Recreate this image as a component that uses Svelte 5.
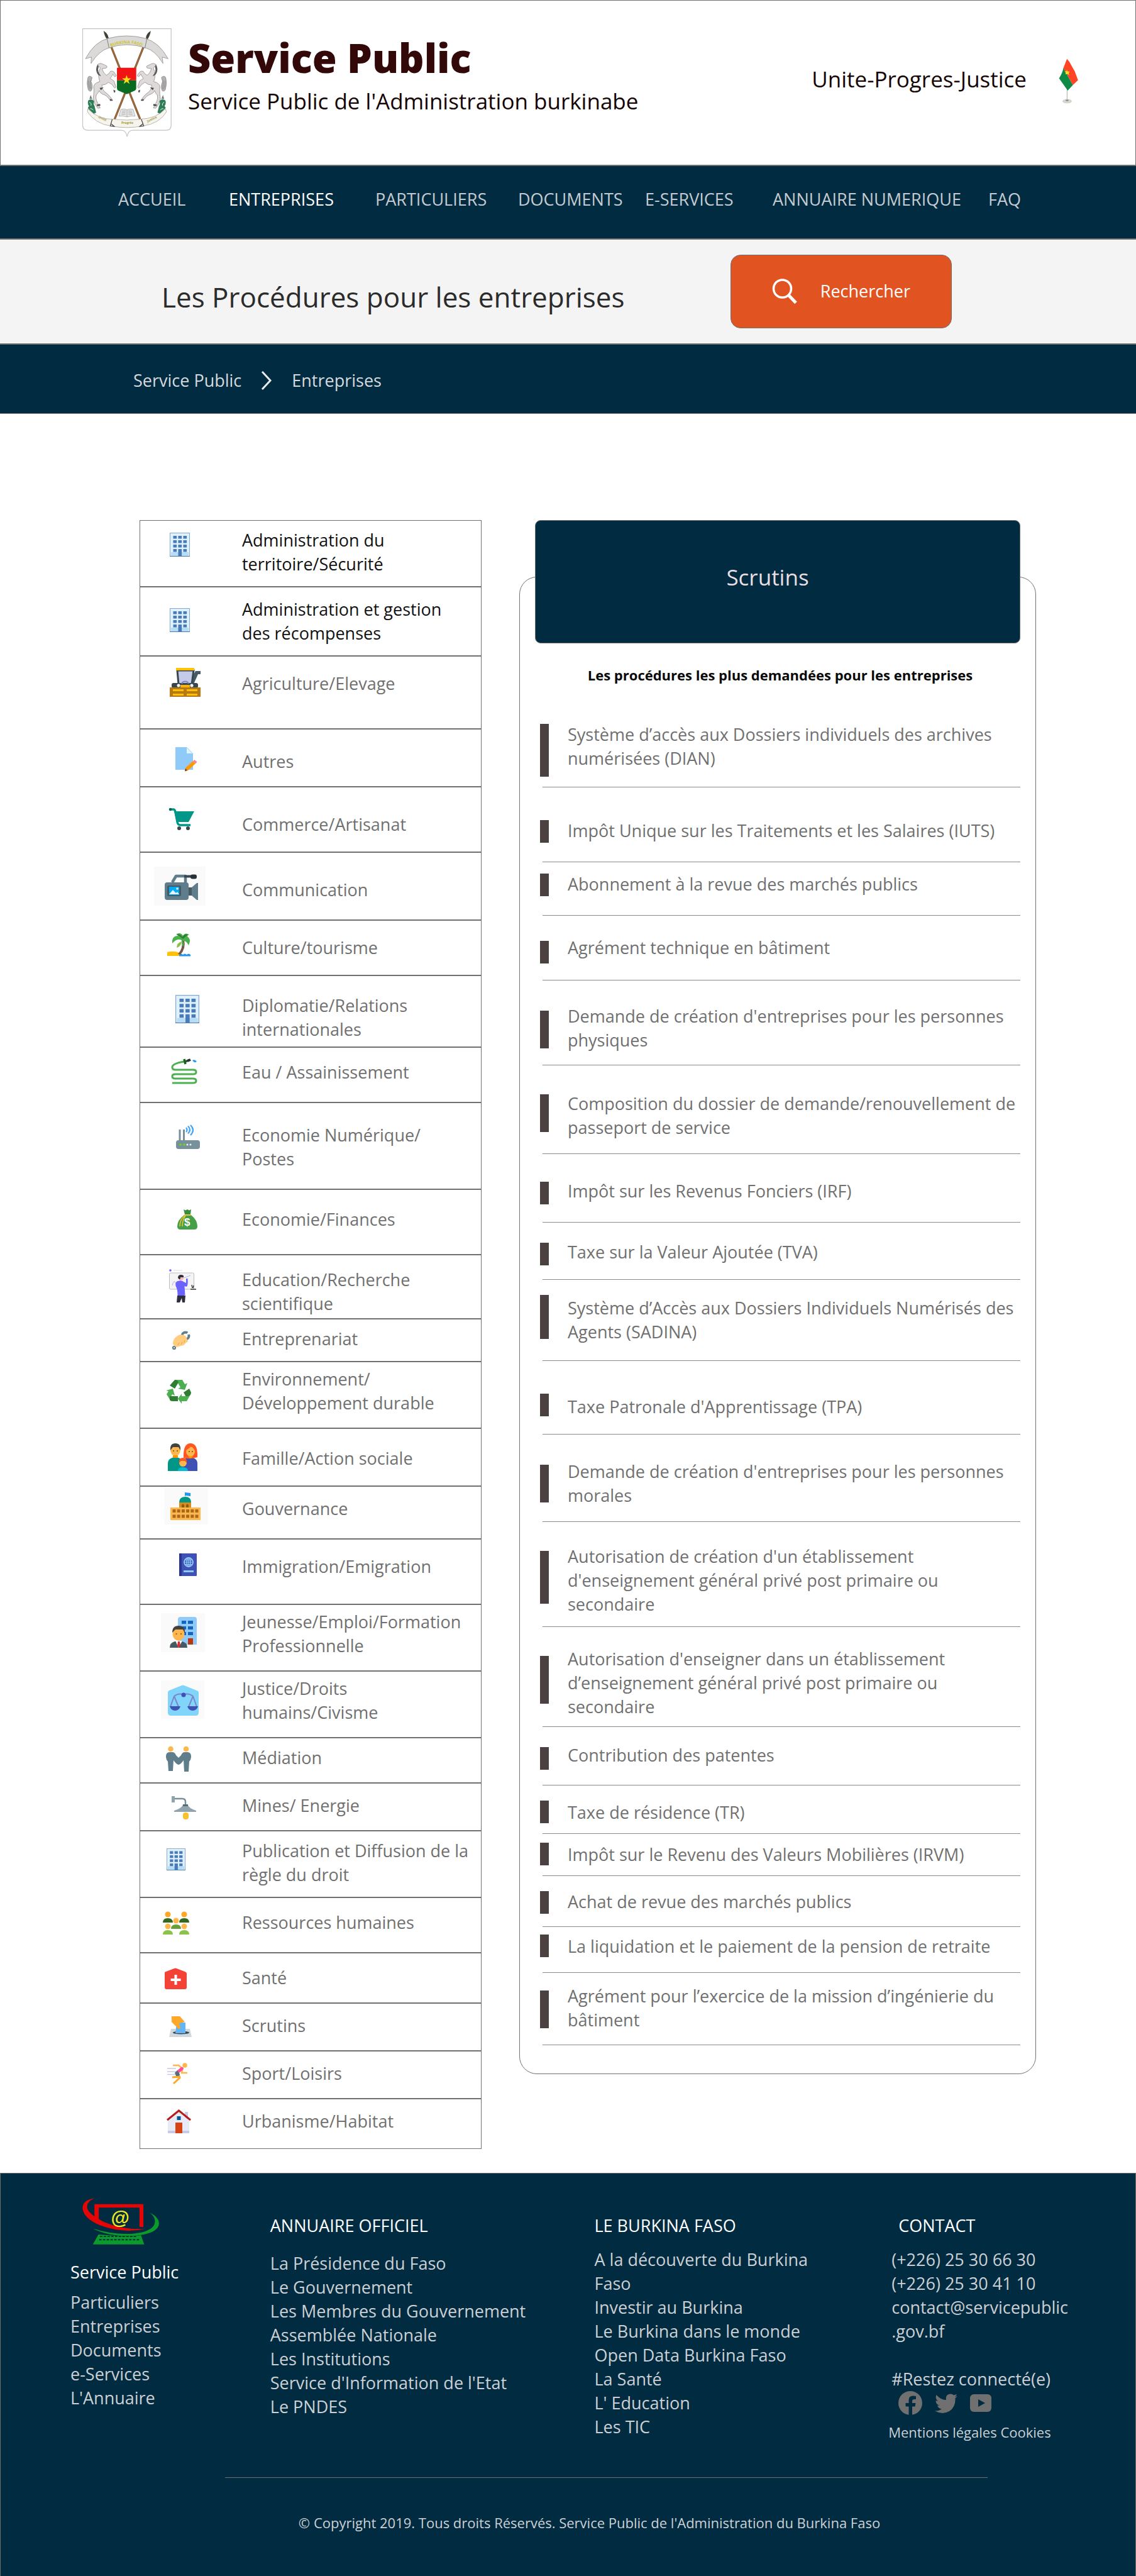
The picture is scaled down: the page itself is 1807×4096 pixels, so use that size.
<script>
  const nav = ['ACCUEIL', 'ENTREPRISES', 'PARTICULIERS', 'DOCUMENTS', 'E-SERVICES', 'ANNUAIRE NUMERIQUE', 'FAQ'];

  // before / after: space above and below the label, in pixels
  const themes = [
    { icon: 'building', x: 47, y: 19, w: 32, h: 38, label: 'Administration du\nterritoire/Sécurité', before: 12, after: 16, strong: true },
    { icon: 'building', x: 47, y: 33, w: 32, h: 38, label: 'Administration et gestion\ndes récompenses', before: 16, after: 16, strong: true },
    { icon: 'harvester', label: 'Agriculture/Elevage', before: 24, after: 52 },
    { icon: 'file', label: 'Autres', before: 32, after: 20 },
    { icon: 'cart', label: 'Commerce/Artisanat', before: 40, after: 24 },
    { icon: 'camera', label: 'Communication', before: 40, after: 28 },
    { icon: 'palm', label: 'Culture/tourisme', before: 24, after: 24 },
    { icon: 'building', x: 56, y: 30, w: 38, h: 45, label: 'Diplomatie/Relations\ninternationales', before: 28, after: 8 },
    { icon: 'hose', label: 'Eau / Assainissement', before: 20, after: 28 },
    { icon: 'router', label: 'Economie Numérique/\nPostes', before: 32, after: 28 },
    { icon: 'bag', label: 'Economie/Finances', before: 28, after: 36 },
    { icon: 'teacher', label: 'Education/Recherche\nscientifique', before: 20, after: 4 },
    { icon: 'hand', label: 'Entreprenariat', before: 12, after: 16 },
    { icon: 'recycle', label: 'Environnement/\nDéveloppement durable', before: 8, after: 20 },
    { icon: 'family', label: 'Famille/Action sociale', before: 28, after: 24 },
    { icon: 'capitol', label: 'Gouvernance', before: 16, after: 28 },
    { icon: 'passport', label: 'Immigration/Emigration', before: 24, after: 40 },
    { icon: 'job', label: 'Jeunesse/Emploi/Formation\nProfessionnelle', before: 8, after: 20 },
    { icon: 'justice', label: 'Justice/Droits\nhumains/Civisme', before: 8, after: 20 },
    { icon: 'meeting', label: 'Médiation', before: 12, after: 20 },
    { icon: 'lamp', label: 'Mines/ Energie', before: 16, after: 20 },
    { icon: 'building', x: 42, y: 27, w: 30, h: 35, label: 'Publication et Diffusion de la\nrègle du droit', before: 12, after: 16 },
    { icon: 'people', label: 'Ressources humaines', before: 20, after: 28 },
    { icon: 'health', label: 'Santé', before: 20, after: 20 },
    { icon: 'vote', label: 'Scrutins', before: 16, after: 20 },
    { icon: 'runner', label: 'Sport/Loisirs', before: 16, after: 20 },
    { icon: 'house', label: 'Urbanisme/Habitat', before: 16, after: 24 }
  ];

  // bar: space above the marker, size: its height
  const procedures = [
    { label: 'Système d’accès aux Dossiers individuels des archives\nnumérisées (DIAN)', before: 30, after: 26, bar: 32, size: 84 },
    { label: 'Impôt Unique sur les Traitements et les Salaires (IUTS)', before: 50, after: 30, bar: 52, size: 36 },
    { label: 'Abonnement à la revue des marchés publics', before: 16, after: 30, bar: 18, size: 36 },
    { label: 'Agrément technique en bâtiment', before: 32, after: 32, bar: 40, size: 36 },
    { label: "Demande de création d'entreprises pour les personnes\nphysiques", before: 38, after: 20, bar: 48, size: 60 },
    { label: 'Composition du dossier de demande/renouvellement de\npasseport de service', before: 42, after: 22, bar: 46, size: 60 },
    { label: 'Impôt sur les Revenus Fonciers (IRF)', before: 40, after: 30, bar: 44, size: 36 },
    { label: 'Taxe sur la Valeur Ajoutée (TVA)', before: 28, after: 24, bar: 32, size: 36 },
    { label: 'Système d’Accès aux Dossiers Individuels Numérisés des\nAgents (SADINA)', before: 26, after: 26, bar: 24, size: 70 },
    { label: "Taxe Patronale d'Apprentissage (TPA)", before: 54, after: 24, bar: 52, size: 36 },
    { label: "Demande de création d'entreprises pour les personnes\nmorales", before: 40, after: 22, bar: 48, size: 60 },
    { label: "Autorisation de création d'un établissement\nd'enseignement général privé post primaire ou\nsecondaire", before: 36, after: 16, bar: 46, size: 84 },
    { label: "Autorisation d'enseigner dans un établissement\nd’enseignement général privé post primaire ou\nsecondaire", before: 32, after: 12, bar: 46, size: 76 },
    { label: 'Contribution des patentes', before: 26, after: 28, bar: 32, size: 36 },
    { label: 'Taxe de résidence (TR)', before: 24, after: 14, bar: 24, size: 36 },
    { label: 'Impôt sur le Revenu des Valeurs Mobilières (IRVM)', before: 14, after: 14, bar: 14, size: 36 },
    { label: 'Achat de revue des marchés publics', before: 22, after: 20, bar: 24, size: 36 },
    { label: 'La liquidation et le paiement de la pension de retraite', before: 12, after: 22, bar: 12, size: 36 },
    { label: 'Agrément pour l’exercice de la mission d’ingénierie du\nbâtiment', before: 18, after: 20, bar: 28, size: 60 }
  ];

  const siteLinks = ['Particuliers', 'Entreprises', 'Documents', 'e-Services', "L'Annuaire"];
  const directory = ['La Présidence du Faso', 'Le Gouvernement', 'Les Membres du Gouvernement', 'Assemblée Nationale', 'Les Institutions', "Service d'Information de l'Etat", 'Le PNDES'];
  const country = ['A la découverte du Burkina\nFaso', 'Investir au Burkina', 'Le Burkina dans le monde', 'Open Data Burkina Faso', 'La Santé', "L' Education", 'Les TIC'];
</script>

{#snippet horse()}
  <path d="M131 238 q12 -10 24 -4 l24 12 q2 8 -6 10 l-18 2 q4 22 22 34 q14 -6 20 -20 q10 -4 18 4 l12 18 -8 6 -10 -14 q-6 14 -14 22 q8 4 20 14 l10 30 -6 6 q-14 -24 -32 -30 q-14 14 -34 14 q-2 16 12 32 q24 16 40 40 l-14 0 q-10 -18 -34 -26 q-14 -6 -18 -18 q-6 16 -14 22 q-6 20 8 44 l12 22 -12 2 q-20 -22 -24 -48 q4 -26 4 -48 q-4 -14 2 -24 q10 -12 28 -16 q-14 -36 2 -68z" fill="#dedada" stroke="#8f8b8b" stroke-width="2.500" />
  <path d="M131 238 q-12 22 -2 44 q8 14 20 14 q-22 -22 -12 -48z" fill="#5c5959" />
  <path d="M104 304 q-14 -14 -22 0 q-8 30 2 62 q8 12 16 4 q10 -20 -2 -46z" fill="#b5b1b1" stroke="#777" stroke-width="2" />
  <path d="M86 320 q-2 22 6 42 M96 318 q-4 20 2 44" fill="none" stroke="#777" stroke-width="2" />
  <path d="M126 442 l18 -4 2 9 -16 2z M194 414 l14 2 0 6 -14 0z M212 366 l10 4 -2 10 -6 -2z M142 356 l20 -2 -14 14z" fill="#4b4848" />
  <path d="M96 392 l-6 20 14 0z" fill="#777" />
  <path d="M84 420 q16 -12 30 4 q-6 14 2 24 l8 34 -12 6 q-22 -18 -30 -30 l6 -10 q-10 -12 -4 -28z" fill="#2f7d57" />
  <path d="M90 430 q12 4 8 16 M94 462 q10 -2 16 8" fill="none" stroke="#fff" stroke-width="3" />
{/snippet}

{#snippet building()}
  <rect x=".5" y=".5" width="31" height="37" fill="#dff1fc" stroke="#7fa9d6" />
  <path d="M0 37 h32 v1 h-32z" fill="#4a7ab5" />
  <path d="M2 31 h28 v6 h-28z" fill="#b6dcf6" />
  <path d="M5.500 5h5.600v4.600h-5.600z m8 0h5.600v4.600h-5.600z m8 0h5.600v4.600h-5.600z m-16 7h5.600v4.600h-5.600z m8 0h5.600v4.600h-5.600z m8 0h5.600v4.600h-5.600z m-16 7h5.600v4.600h-5.600z m8 0h5.600v4.600h-5.600z m8 0h5.600v4.600h-5.600z m-16 7h5.600v4.600h-5.600z m16 0h5.600v4.600h-5.600z m-8 0h5.600v11.500h-5.600z" fill="#4a7bb9" />
{/snippet}

{#snippet drawing(name)}
  {#if name === 'harvester'}
    <path d="M84 46 l8 -18 h4 v-5 h-8 l-12 22z" fill="#455a64" />
    <path d="M59 22 h26 l-3 22 h-21z" fill="#c5cae9" stroke="#37474f" stroke-width="3" />
    <rect x="57" y="18" width="29" height="4" fill="#ffc107" />
    <rect x="50" y="42" width="42" height="8" rx="3" fill="#37474f" />
    <path d="M66 43 a6 6 0 0 1 11 0" fill="none" stroke="#7986cb" stroke-width="2" />
    <rect x="64" y="45" width="15" height="5" fill="#ffb300" />
    <rect x="47" y="49" width="49" height="15" fill="#b57a14" />
    <path d="M52 52h17v3h-17z m22 0h17v3h-17z m-22 7h17v3h-17z m22 0h17v3h-17z" fill="#ffc107" />
    <circle cx="61" cy="46" r="2.500" fill="#fff" /><circle cx="82" cy="46" r="2.500" fill="#fff" />
  {:else if name === 'file'}
    <path d="M56 28 h18 l10 10 v26 h-28z" fill="#90caf9" />
    <path d="M74 29 v9 h9z" fill="#e1f5fe" />
    <path d="M72 61 l12 -11 4 4 -12 11 -5 1z" fill="#ff9800" />
    <path d="M84 50 l2.500 -2 4 3.500 -2.500 3z" fill="#ef8a9c" />
    <path d="M72 62 l3 3 -4 1.500z" fill="#5d4037" />
  {:else if name === 'cart'}
    <path d="M47 35 h6 q2 0 3 4 l3 16 q1 5 5 5 h16" fill="none" stroke="#009688" stroke-width="3.500" />
    <path d="M54 38 h32 l-9 17 h-19z" fill="#009688" />
    <circle cx="48" cy="35" r="2.300" fill="#00695c" />
    <circle cx="62" cy="65" r="3" fill="#37474f" /><circle cx="76" cy="65" r="3" fill="#37474f" />
  {:else if name === 'camera'}
    <rect x="22" y="22" width="82" height="62" fill="#fafafa" />
    <path d="M51 47 l6 -10 h15 v10" fill="none" stroke="#607d8b" stroke-width="4.500" stroke-linejoin="round" />
    <rect x="70" y="35.500" width="14" height="4" fill="#37474f" />
    <rect x="80" y="34.500" width="10" height="7" rx="3" fill="#263238" />
    <rect x="39" y="47" width="38" height="28" rx="4" fill="#607d8b" />
    <rect x="43" y="52" width="22" height="17" rx="2" fill="#455a64" />
    <rect x="46" y="54" width="16" height="13" fill="#03a9f4" />
    <path d="M46 66 l6 -7 5 5 2 -2 3 4z" fill="#e1f5fe" /><circle cx="59" cy="57" r="1.800" fill="#e1f5fe" />
    <rect x="77" y="55" width="5" height="13" fill="#455a64" />
    <path d="M82 55 l8 -7 h2 v27 h-2 l-8 -7z" fill="#607d8b" />
  {:else if name === 'palm'}
    <path d="M43 50 q16 -4 26 6 h-26z" fill="#ffc107" />
    <path d="M62 54 q3 -3 6 0 q3 -3 6 0 q3 -3 6 0 v2.500 h-18z" fill="#2196f3" />
    <path d="M66 31 q3 12 -6 22 l4 1 q9 -10 6 -23z" fill="#795548" />
    <path d="M67 32 q-7 -6 -16 4 q-1 -12 9 -12 q-4 -4 -2 -3 q7 -3 10 3 q3 -6 10 -2 q-3 1 -3 3 q7 4 2 14 q-4 -8 -9 -7 q2 4 1 9 q-5 -4 -2 -9z" fill="#4caf50" />
    <path d="M66 33 q-8 2 -8 10 q7 -2 8 -10z" fill="#8bc34a" />
    <path d="M58 21 q6 0 9 5 q4 -6 9 -4 l-8 7z" fill="#2e7d32" />
  {:else if name === 'hose'}
    <path d="M70 22 q-19 3 -19 9 q0 4 5 4 h28 q5 0 5 3.500 t-5 3.500 h-28 q-5 0 -5 3.500 t5 3.500 h28 q5 0 5 3.500 t-5 3.500 h-33" fill="none" stroke="#4caf50" stroke-width="3" />
    <path d="M70 18 l2 8 M72 22 l7 -3" stroke="#1b5e20" stroke-width="3.500" fill="none" />
    <path d="M75 21 l5 -2" stroke="#263238" stroke-width="4" />
    <path d="M83 20 q4 -2 7 2 q-4 3 -7 -2z" fill="#2196f3" />
  {:else if name === 'router'}
    <path d="M63 42 v18 M69.500 42 v18" stroke="#78909c" stroke-width="3" />
    <path d="M73 39 q3 4 0 7 M76 36.500 q6 6 0 12 M80 35 q8 8 0 16" fill="none" stroke="#42a5f5" stroke-width="2.200" />
    <rect x="57" y="59" width="38" height="14" rx="4" fill="#78909c" />
    <circle cx="64" cy="66" r="1.800" fill="#64dd17" /><circle cx="70" cy="66" r="1.800" fill="#64dd17" />
    <circle cx="75" cy="66" r="1.500" fill="#eceff1" /><circle cx="80" cy="66" r="1.500" fill="#eceff1" />
  {:else if name === 'bag'}
    <path d="M69 31 l3 1.500 3 -1.500 3 1.500 3 -1.500 -1 8 h-9z" fill="#388e3c" />
    <path d="M70 40 h11 q10 8 10 18 q0 5 -5 5 h-22 q-5 0 -5 -5 q0 -10 11 -18z" fill="#43a047" />
    <path d="M70 40 h11 M71 41 q-8 6 -8 17 M72 41 q-5 7 -5 17" fill="none" stroke="#fbc02d" stroke-width="1.500" />
    <text x="70" y="57" class="dollar">$</text>
  {:else if name === 'teacher'}
    <path d="M53 24 h14" stroke="#eee" stroke-width="2" /><circle cx="48" cy="24" r="1.800" fill="#6c63ff" />
    <rect x="46.500" y="28" width="39" height="26" rx="2" fill="#f4f4f4" stroke="#bdbdbd" />
    <path d="M51 48 q3 -12 6 -2 q4 8 7 -8 l16 -6" fill="none" stroke="#b3aefc" />
    <path d="M80 54 h9 M82 47 l1 5 M85 48 l-1 4" stroke="#333" stroke-width="1.300" />
    <circle cx="65" cy="36" r="3.800" fill="#ffb8b8" />
    <path d="M60 36 q0 -5 5 -5 q5 0 4 4 l-5 0 q0 4 -2 3z" fill="#2f2e41" />
    <path d="M60 41 q6 -2 9 1 l4 2 0 -7 2.500 0 q1 12 -2 13 l-3 -1 1 14 q-6 4 -12 1 q0 -11 -3 -15 q-1 -7 3 -8z" fill="#6c63ff" />
    <path d="M59 64 h13 l-1 11 h-4 l-1 -7 -3 7 h-5z" fill="#2f2e41" />
  {:else if name === 'hand'}
    <circle cx="72" cy="26" r="5.500" fill="none" stroke="#607d8b" stroke-width="4" />
    <path d="M72 25 l7 -8 3 6z" fill="#fff" />
    <circle cx="54" cy="45" r="2" fill="none" stroke="#607d8b" stroke-width="2.200" />
    <path d="M52 38 q0 -8 9 -13 q6 -3 12 2 l3 8 q-3 2 -4 3 q-3 4 -7 4 l-7 2 q-5 -2 -6 -6z" fill="#ffcc80" />
    <path d="M60 41 l2 -4 M65 40 l2 -4 M70 37 l1 -4" stroke="#e0a458" fill="none" />
  {:else if name === 'recycle'}
    <path d="M55 28 h12 l4 7 4 -2 -4 11 -11 -2 4 -2 -4 -7z" fill="#4caf50" />
    <path d="M55 28 q4 0 6 4 l-6 10 -8 -5z" fill="#2e7d32" />
    <path d="M78 42 l3 6 q0 3 -2 5 l-5 4 -5 -9z" fill="#2e7d32" />
    <path d="M79 53 l-5 9 h-8 v4 l-6 -8 6 -8 v4 h10z" fill="#4caf50" />
    <path d="M41 45 l11 -3 3 11 -4 -2 -4 8 -5 -8 3 -5z" fill="#4caf50" />
    <path d="M47 54 h13 v8 h-9 q-3 0 -4 -2z" fill="#2e7d32" />
  {:else if name === 'family'}
    <path d="M44 67 v-12 q0 -9 12 -10 q12 1 12 10 v12z" fill="#009688" />
    <path d="M67 67 v-12 q0 -9 12 -10 q12 1 12 10 v12z" fill="#3f51b5" />
    <path d="M69 46 q-1 -23 11 -23 q12 0 11 22 q-11 4 -22 1z" fill="#ff5722" />
    <ellipse cx="56" cy="34" rx="8" ry="9" fill="#ffb74d" /><path d="M52 42h8v4h-8z M76 42h8q0 3 -4 5 q-4 -2 -4 -5z" fill="#ff9800" />
    <path d="M48 34 q-1 -11 8 -11 q9 0 8 11 l-3 -5 h-9z" fill="#424242" />
    <ellipse cx="80" cy="36" rx="7" ry="7.500" fill="#ffb74d" /><path d="M73 34 l9 -6 5 6 v-5 h-14z" fill="#ff5722" />
    <circle cx="68" cy="54" r="6" fill="#ffb74d" /><path d="M62 54 q-1 -8 6 -8 q7 0 6 8 l-3 -3 h-6z" fill="#ff5722" />
    <path d="M60 67 q0 -6 8 -6 q8 0 8 6z" fill="#00bcd4" />
    <path d="M52 35h2m4 0h2m17 1h2m3 0h2" stroke="#6d4c1b" stroke-width="1.500" />
  {:else if name === 'capitol'}
    <rect x="38" y="1" width="70" height="59" fill="#fafafa" />
    <path d="M71 16 v-7 l9 1 v5 l-8 -1z" fill="#2196f3" />
    <path d="M62 25 q0 -9 10 -9 q9 0 9 9z" fill="#009688" />
    <rect x="62" y="25" width="19" height="8" fill="#d98a1c" /><path d="M66 33v-4q2-3 4 0v4z m7 0v-4q2-3 4 0v4z" fill="#8d5a12" />
    <rect x="48" y="33" width="48" height="20" fill="#ffb74d" />
    <path d="M51.500 36h5v5h-5z m7.200 0h5v5h-5z m7.200 0h5v5h-5z m7.200 0h5v5h-5z m7.200 0h5v5h-5z m7.200 0h5v5h-5z m-36 8.500h5v5h-5z m7.200 0h5v5h-5z m7.200 0h5v5h-5z m7.200 0h5v5h-5z m7.200 0h5v5h-5z m7.200 0h5v5h-5z" fill="#a9671a" />
  {:else if name === 'passport'}
    <rect x="62" y="22" width="28" height="36" rx="1" fill="#3f51b5" /><rect x="62" y="22" width="4" height="36" fill="#283593" />
    <circle cx="77" cy="36" r="7" fill="none" stroke="#90caf9" stroke-width="1.800" />
    <ellipse cx="77" cy="36" rx="3" ry="7" fill="none" stroke="#90caf9" stroke-width="1.400" />
    <path d="M70 36h14 M71 32.500h12 M71 39.500h12 M77 29v14" stroke="#90caf9" stroke-width="1.200" />
    <rect x="69" y="49" width="16" height="3" fill="#90caf9" />
  {:else if name === 'job'}
    <rect x="33" y="13" width="70" height="62" fill="#fafafa" />
    <path d="M60 63 v-40 q0 -4 4 -4 h22 q4 0 4 4 v40z" fill="#90caf9" />
    <path d="M66 25h7v5h-7z m10 0h8v5h-8z m-10 9h7v5h-7z m10 0h8v5h-8z m-10 9h7v5h-7z m10 0h8v5h-8z" fill="#1565c0" />
    <rect x="76" y="53" width="8" height="10" fill="#bf360c" />
    <path d="M47 68 q0 -8 8 -10 h12 q8 2 8 10z" fill="#455a64" />
    <path d="M56 57 l5 11 6 -11z" fill="#fff" /><path d="M60 58h3l1 7-2.500 3-2.500-3z" fill="#d32f2f" />
    <ellipse cx="61" cy="46" rx="9.500" ry="10.500" fill="#ffb74d" />
    <path d="M51 44 q0 -11 10 -11 q11 0 10 12 l-3 -6 h-12z" fill="#424242" />
    <circle cx="57.500" cy="46" r="1" fill="#784719" /><circle cx="65" cy="46" r="1" fill="#784719" />
  {:else if name === 'justice'}
    <rect x="33" y="14" width="69" height="61" fill="#fafafa" />
    <path d="M44 33 q0 -2 2 -3 l20 -8 q2 -1 4 0 l20 8 q3 1 3 3 v32 q0 5 -5 5 h-39 q-5 0 -5 -5z" fill="#81d4fa" />
    <path d="M54 39 q6 -5 15 -3 q9 -2 15 3 M54 39 l-6 17 M54 39 l7 17 M84 39 l-7 17 M84 39 l6 17" fill="none" stroke="#7986cb" stroke-width="2" />
    <path d="M47 55 h17 q-2 7 -8.500 7 t-8.500 -7z M75 55 h17 q-2 7 -8.500 7 t-8.500 -7z" fill="#3f51b5" />
    <circle cx="69" cy="37" r="3.500" fill="#3f51b5" />
  {:else if name === 'meeting'}
    <circle cx="48.500" cy="17" r="4.300" fill="#ffb74d" /><circle cx="73" cy="17" r="4.300" fill="#ffb74d" />
    <path d="M45 52 l-1 -15 q-3 -3 -3 -8 q0 -7 6 -7 h4 q4 0 6 5 l4 4 4 -4 q2 -5 6 -5 h4 q6 0 6 7 q0 5 -3 8 l-1 16 h-7 l-1 -18 q-5 7 -8 7 q-3 0 -8 -7 l-1 17z" fill="#607d8b" />
  {:else if name === 'lamp'}
    <rect x="50" y="20" width="5" height="10" fill="#90a4ae" />
    <path d="M55 24 h12 q5 0 5 5 v8" fill="none" stroke="#78909c" stroke-width="2.500" />
    <rect x="68" y="46" width="9" height="11" rx="4" fill="#fbc02d" />
    <path d="M68 34 h8 q1 5 13 9 v2 h-35 v-2 q11 -3 14 -9z" fill="#90a4ae" /><rect x="68" y="33" width="8" height="3" fill="#546e7a" />
  {:else if name === 'people'}
    <circle cx="44" cy="26" r="4.500" fill="#ffa726" /><circle cx="70" cy="26" r="4.500" fill="#ffa726" />
    <path d="M36 39 q0 -7 8 -7 t8 7z M62 39 q0 -7 8 -7 t8 7z" fill="#33691e" />
    <circle cx="57" cy="36" r="4.500" fill="#ffb74d" /><path d="M49 49 q0 -7 8 -7 t8 7z" fill="#689f38" />
    <circle cx="44" cy="45" r="4.500" fill="#ffb74d" /><circle cx="70" cy="45" r="4.500" fill="#ffb74d" />
    <path d="M36 58 q0 -7 8 -7 t8 7z M62 58 q0 -7 8 -7 t8 7z" fill="#8bc34a" />
  {:else if name === 'health'}
    <path d="M39 31 q0 -2 2 -2 l13 -5 q2 -1 4 0 l13 5 q3 1 3 3 v22 q0 3 -3 3 h-29 q-3 0 -3 -3z" fill="#f44336" />
    <path d="M54.500 34h4v6h6v4h-6v6h-4v-6h-6v-4h6z" fill="#fff" />
  {:else if name === 'vote'}
    <path d="M49 40 h30 l3 13 h-36z" fill="#cfd8dc" /><ellipse cx="65" cy="46" rx="13" ry="2.500" fill="#37474f" />
    <path d="M58 30 h14 v17 h-16z" fill="#64b5f6" />
    <path d="M50 20 h13 l8 9 -9 2 2 8 -3 1 -11 -11z" fill="#ffa726" />
  {:else if name === 'runner'}
    <path d="M43 27h14 M43 32h14 M43 36.500h14" stroke="#c5cae9" stroke-width="1.500" />
    <circle cx="71" cy="22" r="3.800" fill="#ffb74d" />
    <path d="M52 22 h9 l5 4 M67 29 l-1 5 h9" fill="none" stroke="#ffb74d" stroke-width="2.600" />
    <path d="M58 31 l7 -6 q4 -1 4 3 l-8 7z" fill="#ff4f9a" />
    <path d="M55 34 l4 -4 4 6 -1 5 h-4z" fill="#546e7a" />
    <path d="M64 40 l-13 1 M64 41 l-11 10" fill="none" stroke="#ffa726" stroke-width="3" />
  {:else if name === 'house'}
    <rect x="71" y="20" width="5" height="12" fill="#c5cae9" />
    <path d="M44 34 l17 -14 17 14 v20 h-34z" fill="#e8eaf6" /><path d="M44 50h34v4h-34z" fill="#c5cae9" />
    <path d="M43 33 l18.500 -15 18.500 15" fill="none" stroke="#b71c1c" stroke-width="3" />
    <rect x="56" y="37" width="11" height="17" fill="#d84315" /><rect x="58.500" y="27" width="6" height="6" fill="#01579b" />
  {/if}
{/snippet}

<div class="page">
  <header class="masthead">
    <svg class="emblem" viewBox="54 54 454 552" role="img" aria-label="Armoiries du Burkina Faso">
      <path d="M55.500 55.500 h450 v490 q0 26 -26 26 h-170 q-22 0 -28 32 q-6 -32 -28 -32 h-172 q-26 0 -26 -26z" fill="#fff" stroke="#c4c4c4" stroke-width="4" />
      <path d="M182 100 L348 516 M384 100 L218 516" stroke="#8d4a26" stroke-width="10" />
      <path d="M182 100 L348 516 M384 100 L218 516" stroke="#a7b26a" stroke-width="2" />
      <path d="M162 66 q24 16 24 34 l-8 8 q-12 -16 -16 -42z M402 66 q-24 16 -24 34 l8 8 q12 -16 16 -42z" fill="#3c4238" />
      <path d="M70 208 q46 -88 118 -104 q90 -24 184 0 q72 20 118 104 l-30 -8 4 32 q-40 -66 -86 -78 q-98 -34 -192 0 q-48 14 -88 78 l2 -32z" fill="#dcd9d9" stroke="#8f8b8b" stroke-width="2.500" />
      <path d="M180 108 l10 46 M382 108 l-10 46" stroke="#777" stroke-width="3" />
      <path id="motto" d="M198 148 q84 -34 166 0" fill="none" />
      <text class="motto"><textPath href="#motto">BURKINA FASO</textPath></text>
      {@render horse()}
      <g transform="translate(560 0) scale(-1 1)">{@render horse()}</g>
      <path d="M230 254 h98 v64 h-98z" fill="#f01414" />
      <path d="M230 318 h98 v40 q0 10 -12 14 l-36 16 -38 -16 q-12 -4 -12 -14z" fill="#0b6a21" />
      <path d="M279 291 l6 17 17 0 -14 11 6 17 -15 -11 -15 11 6 -17 -14 -11 17 0z" fill="#f7dc1c" />
      <path d="M250 466 q16 -6 31 2 q15 -8 31 -2 l10 34 q-22 -4 -41 4 q-19 -8 -41 -4z" fill="#e9e9e9" stroke="#888" stroke-width="2" />
      <path d="M281 470 v32 M256 474 h18 M254 482 h20 M252 490 h22 M288 474 h18 M288 482 h20 M288 490 h22" stroke="#999" stroke-width="2.500" />
      <path d="M82 462 q50 56 136 54 q62 8 124 0 q90 -2 134 -54 l6 16 q-36 60 -120 72 q-80 16 -166 0 q-76 -12 -116 -72z" fill="#f7f4ee" stroke="#a5a09a" stroke-width="2.500" />
      <path d="M206 516 l-10 34 20 2 -14 -12 M354 516 l12 34 -20 2 14 -12" fill="none" stroke="#444" stroke-width="4" />
      <text x="134" y="508" transform="rotate(24 134 508)" class="scroll">Unité</text>
      <text x="252" y="541" class="scroll">Progrès</text>
      <text x="386" y="532" transform="rotate(-26 386 532)" class="scroll">Justice</text>
    </svg>
    <div class="brand">
      <h1>Service Public</h1>
      <p>Service Public de l'Administration burkinabe</p>
    </div>
    <p class="devise">Unite-Progres-Justice</p>
    <svg class="flag" viewBox="70 52 105 232" role="img" aria-label="Drapeau du Burkina Faso">
      <ellipse cx="116" cy="268" rx="22" ry="9" fill="#d8dad2" stroke="#b3b5ab" stroke-width="2" />
      <path d="M116 200 v64" stroke="#b9bbb0" stroke-width="4" /><ellipse cx="116" cy="264" rx="8" ry="4" fill="#8f9187" />
      <path d="M115 54 l12 14 28 50 16 44 -26 24 -48 -86z" fill="#ff4526" />
      <path d="M97 100 q-4 24 -22 52 l44 62 26 -28z" fill="#0e8a45" />
      <path d="M114 110 l5 8 10 0 -5 8 2 10 -9 -6 -9 2 1 -9 -6 -7 9 1z" fill="#fde021" />
    </svg>
  </header>

  <nav class="menu" aria-label="Navigation principale">
    {#each nav as item}
      <a href="#{item.toLowerCase().replace(' ', '-')}" class:current={item === 'ENTREPRISES'}>{item}</a>
    {/each}
  </nav>

  <section class="titlebar">
    <h2>Les Procédures pour les entreprises</h2>
    <button type="button">
      <svg viewBox="0 0 40 42" aria-hidden="true">
        <circle cx="16.500" cy="17" r="14" fill="none" stroke="#fff" stroke-width="3.500" />
        <path d="M26.500 27.500 L38 39.500" stroke="#fff" stroke-width="5" />
      </svg>
      Rechercher
    </button>
  </section>

  <nav class="crumbs" aria-label="Fil d’Ariane">
    <a href="#accueil">Service Public</a>
    <svg viewBox="0 0 18 32" aria-hidden="true"><path d="M2 2 L15 16 L2 30" fill="none" stroke="#e8ecee" stroke-width="3" /></svg>
    <a href="#entreprises" aria-current="page">Entreprises</a>
  </nav>

  <main>
    <ul class="themes">
      {#each themes as theme}
        <li class:strong={theme.strong} style:--before="{theme.before}px" style:--after="{theme.after}px">
          <svg viewBox="0 0 150 60" aria-hidden="true">
            {#if theme.icon === 'building'}
              <g transform="translate({theme.x} {theme.y}) scale({theme.w / 32} {theme.h / 38})">{@render building()}</g>
            {:else}
              {@render drawing(theme.icon)}
            {/if}
          </svg>
          <a href="#theme">{theme.label}</a>
        </li>
      {/each}
    </ul>

    <section class="panel">
      <h2>Scrutins</h2>
      <h3>Les procédures les plus demandées pour les entreprises</h3>
      <ul>
        {#each procedures as item}
          <li style:--before="{item.before}px" style:--after="{item.after}px" style:--bar="{item.bar}px" style:--size="{item.size}px">
            <a href="#procedure">{item.label}</a>
          </li>
        {/each}
      </ul>
    </section>
  </main>

  <footer>
    <div class="columns">
      <section class="site">
        <svg class="logo" viewBox="56 44 394 242" role="img" aria-label="Service Public en ligne">
          <path d="M120 78 h248 v116 h-20 v-98 h-206 v70 l-22 -10z" fill="#e60505" />
          <path d="M122 48 q-66 10 -62 54 q8 50 90 84 q110 42 228 18 q-120 4 -210 -36 q-70 -36 -84 -66 q-8 -36 38 -54z" fill="#e60505" />
          <path d="M400 122 q52 24 46 62 q-14 50 -150 56 q-110 0 -184 -38 q100 32 200 26 q90 -8 110 -44 q16 -34 -22 -62z" fill="#0c9a2b" />
          <path d="M140 232 q160 14 216 4 l16 46 h-260z" fill="#0c9a2b" />
          <path d="M148 242 h190 M144 258 h204" stroke="#002b40" stroke-width="6" stroke-dasharray="12 7" />
          <text x="202" y="182" class="at">@</text>
        </svg>
        <h2>Service Public</h2>
        <ul>{#each siteLinks as link}<li><a href="#lien">{link}</a></li>{/each}</ul>
      </section>
      <section class="directory">
        <h2>ANNUAIRE OFFICIEL</h2>
        <ul>{#each directory as link}<li><a href="#lien">{link}</a></li>{/each}</ul>
      </section>
      <section class="country">
        <h2>LE BURKINA FASO</h2>
        <ul>{#each country as link}<li><a href="#lien">{link}</a></li>{/each}</ul>
      </section>
      <section class="contact">
        <h2>CONTACT</h2>
        <address>
          <a href="tel:+22625306630">(+226) 25 30 66 30</a>
          <a href="tel:+22625304110">(+226) 25 30 41 10</a>
          <a href="mailto:contact@servicepublic.gov.bf">contact@servicepublic<br />.gov.bf</a>
        </address>
        <p>#Restez connecté(e)</p>
        <div class="social">
          <a href="#facebook" aria-label="Facebook"><svg viewBox="0 0 38 38"><circle cx="19" cy="19" r="19" fill="#707070" /><path d="M16.500 38 v-13.500 h-5 v-5.500 h5 v-4.500 q0 -7 7 -7 l4.500 .5 v5 h-2.500 q-3.500 0 -3.500 3 v3 h5.500 l-1 5.500 h-4.500 v13.500z" fill="#002b40" /></svg></a>
          <a href="#twitter" aria-label="Twitter"><svg viewBox="0 0 36 38"><path d="M36 8 q-2 2 -3.500 3 q1 14 -9.500 21 q-11 6 -23 -.5 q6 .5 11 -3 q-5.500 -1 -7 -5.500 l3.500 0 q-6 -2 -6 -8 l3.500 1 q-5 -4 -2.500 -10 q7 8 15.500 8 q-1.500 -9 7 -9.500 q3 0 5 2 l5 -1.500 q-1 2.500 -3 4z" fill="#707070" /></svg></a>
          <a href="#youtube" aria-label="YouTube"><svg viewBox="0 0 34 38"><rect y="5" width="34" height="28" rx="6" fill="#707070" /><path d="M13 13 l11 6 -11 6z" fill="#002b40" /></svg></a>
        </div>
        <p class="legal"><a href="#mentions">Mentions légales</a> <a href="#cookies">Cookies</a></p>
      </section>
    </div>
    <hr />
    <p class="copyright">© Copyright 2019. Tous droits Réservés. Service Public de l'Administration du Burkina Faso</p>
  </footer>
</div>

<style>
  :global(body) { background: #fff; }
  .page {
    font-family: "Open Sans", "Noto Sans", sans-serif;
    font-size: 27px;
    line-height: 38px;
    color: #707070;
    white-space: nowrap;
  }
  h1, h2, h3, p, ul { margin: 0; padding: 0; font-weight: 400; font-size: inherit; }
  ul { list-style: none; }
  a { color: inherit; text-decoration: none; }
  svg { display: block; }

  .masthead {
    display: flex;
    align-items: flex-start;
    padding: 44px 90px 44px 130px;
    border: 1px solid #707070;
    border-bottom: 0;
    color: #150505;
  }
  .emblem { width: 142px; height: 173px; }
  .motto { font-size: 22px; font-weight: 700; fill: #cfc531; }
  .scroll { font-size: 16px; font-weight: 700; fill: #a09a3c; }
  .brand { margin-left: 26px; padding-top: 2px; }
  h1 { font-size: 63px; line-height: 90px; font-weight: 800; color: #330808; }
  .brand p { font-size: 35px; line-height: 48px; }
  .devise { margin-left: auto; padding-top: 57px; font-size: 35px; line-height: 48px; }
  .flag { width: 33px; height: 73px; margin: 48px 0 0 50px; }

  .menu {
    display: grid;
    grid-template-columns: 176fr 233fr 227fr 202fr 203fr 343fr 235fr;
    padding: 34px 0 43px 188px;
    border-top: 2px solid #707070;
    background: #002b40;
    color: #c5cbd0;
  }
  .menu .current { color: #fff; }

  .titlebar {
    display: flex;
    align-items: flex-start;
    padding: 24px 293px 24px 257px;
    border-top: 2px solid #707070;
    background: #f4f4f4;
  }
  .titlebar h2 { padding-top: 39px; font-size: 44px; line-height: 56px; color: #2b2b2b; }
  button {
    display: flex;
    align-items: center;
    gap: 37px;
    margin-left: auto;
    padding: 36px 65px 37px 65px;
    border: 1px solid #707070;
    border-radius: 16px;
    background: #e15422;
    color: #fff;
    font: inherit;
  }
  button svg { width: 40px; height: 42px; }

  .crumbs {
    display: flex;
    align-items: center;
    gap: 31px;
    padding: 38px 212px 33px;
    border-top: 2px solid #707070;
    border-bottom: 1px solid #707070;
    background: #002b40;
    color: #d5dade;
  }
  .crumbs svg { width: 18px; height: 32px; }

  main {
    display: grid;
    grid-template-columns: 544fr 822fr;
    align-items: start;
    gap: 60px;
    padding: 169px 159px 38px 222px;
  }

  .themes { border: 1px solid #707070; }
  .themes li { display: flex; align-items: flex-start; border-bottom: 2px solid #707070; }
  .themes li:last-child { border-bottom: 0; }
  .themes svg { flex: none; width: 150px; height: 60px; overflow: visible; }
  .themes a { margin-left: 12px; padding: var(--before) 0 var(--after); white-space: pre; }
  .strong { color: #111; }
  .dollar { font: 700 17px "Liberation Sans", sans-serif; fill: #fff; }

  .panel {
    margin-top: 90px;
    padding: 0 24px 45px;
    border: 1px solid #707070;
    border-radius: 28px;
  }
  .panel h2 {
    margin-top: -91px;
    padding: 66px 32px 80px 0;
    border: 1px solid #707070;
    border-radius: 9px;
    background: #002b40;
    color: #e9dfe2;
    font-size: 35px;
    line-height: 48px;
    text-align: center;
  }
  .panel h3 {
    padding: 32px 0 28px 8px;
    font-size: 22px;
    line-height: 36px;
    font-weight: 700;
    color: #0a0a0a;
    text-align: center;
  }
  .panel li {
    display: flex;
    align-items: flex-start;
    margin-left: 12px;
    border-bottom: 1px solid #8a8a8a;
  }
  .panel li::before {
    content: "";
    width: 14px;
    height: var(--size);
    margin: var(--bar) 30px 0 -4px;
    background: #4b4141;
  }
  .panel li a { padding: var(--before) 0 var(--after); white-space: pre; }

  footer { border: 1px solid #707070; background: #002b40; color: #ccd0d4; padding-bottom: 66px; }
  .columns {
    display: grid;
    grid-template-columns: 318fr 516fr 473fr 388fr;
    padding-left: 111px;
  }
  footer h2 { color: #fff; }
  footer li { white-space: pre; }
  .logo { width: 124px; height: 76px; margin: 38px 0 24px 18px; }
  .at { font: italic 700 96px "Liberation Sans", sans-serif; fill: #f4e81c; }
  .site h2 { margin-bottom: 10px; }
  .directory h2, .country h2, .contact h2 { padding-top: 64px; }
  .directory h2 { margin-bottom: 22px; }
  .country h2, .contact h2 { margin-bottom: 16px; }
  .contact h2 { padding-left: 11px; }
  address { font-style: normal; margin-bottom: 38px; }
  address a { display: block; }
  .social { display: flex; gap: 20px; padding: 0 0 0 11px; }
  .social svg { height: 38px; }
  .legal { margin-left: -5px; padding-top: 8px; font-size: 22px; }
  hr { margin: 53px 235px 0 357px; border: 0; border-top: 1px solid #707070; }
  .copyright { padding: 52px 0 0 68px; font-size: 22px; text-align: center; }
</style>
